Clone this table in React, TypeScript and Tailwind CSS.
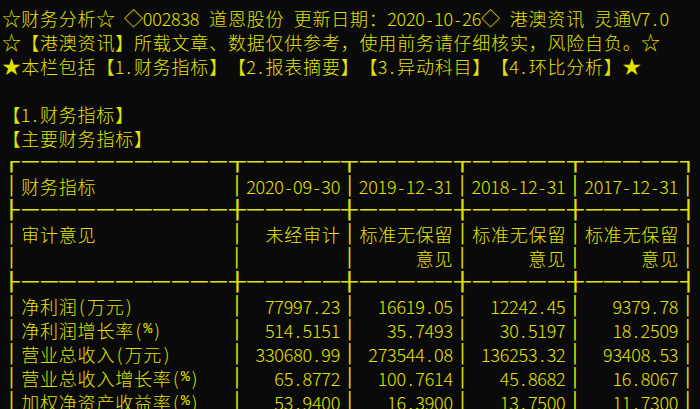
import React from "react";

const isWide = (c: string) => c.charCodeAt(0) > 0x2000;
const isBox = (c: string) => {
  const k = c.charCodeAt(0);
  return k >= 0x2500 && k <= 0x257f;
};
const isSym = (c: string) => c === "☆" || c === "★" || c === "◇";
const cols = (s: string) => [...s].reduce((n, c) => n + (isWide(c) ? 2 : 1), 0);
const padR = (s: string, n: number) => s + " ".repeat(Math.max(0, n - cols(s)));
const padL = (s: string, n: number) => " ".repeat(Math.max(0, n - cols(s))) + s;

const row = (label: string, vals: string[]) =>
  "│" + padR(label, 22) + "│" + vals.map((v) => padL(v, 10)).join("│") + "│";

const topLine = "┌" + "─".repeat(11) + ("┬" + "─".repeat(5)).repeat(4) + "┐";
const midLine = "├" + "─".repeat(11) + ("┼" + "─".repeat(5)).repeat(4) + "┤";

const lines: string[] = [
  "☆财务分析☆ ◇002838 道恩股份 更新日期：2020-10-26◇ 港澳资讯 灵通V7.0",
  "☆【港澳资讯】所载文章、数据仅供参考，使用前务请仔细核实，风险自负。☆",
  "★本栏包括【1.财务指标】【2.报表摘要】【3.异动科目】【4.环比分析】★",
  "",
  "【1.财务指标】",
  "【主要财务指标】",
  topLine,
  row("财务指标", ["2020-09-30", "2019-12-31", "2018-12-31", "2017-12-31"]),
  midLine,
  row("审计意见", ["未经审计", "标准无保留", "标准无保留", "标准无保留"]),
  row("", ["", "意见", "意见", "意见"]),
  midLine,
  row("净利润(万元)", ["77997.23", "16619.05", "12242.45", "9379.78"]),
  row("净利润增长率(%)", ["514.5151", "35.7493", "30.5197", "18.2509"]),
  row("营业总收入(万元)", ["330680.99", "273544.08", "136253.32", "93408.53"]),
  row("营业总收入增长率(%)", ["65.8772", "100.7614", "45.8682", "16.8067"]),
  row("加权净资产收益率(%)", ["53.9400", "16.3900", "13.7500", "11.7300"]),
];

function Cell({ c }: { c: string }) {
  if (isBox(c)) {
    return (
      <span className="flex w-[18.8px] min-w-0 shrink-0 justify-center font-['DejaVu_Sans_Mono'] text-[18px]">
        {c === "│" ? (
          <span>{c}</span>
        ) : (
          <span className="inline-block scale-x-[1.5]">{c}</span>
        )}
      </span>
    );
  }
  if (isSym(c)) {
    return (
      <span className="flex w-[18.8px] min-w-0 shrink-0 justify-center text-[19px] leading-[24px]">{c}</span>
    );
  }
  if (isWide(c)) {
    return <span className="flex w-[18.8px] min-w-0 shrink-0 justify-center">{c}</span>;
  }
  if (c === "%") {
    return (
      <span className="flex w-[9.4px] min-w-0 shrink-0 justify-center font-['Liberation_Mono'] text-[15px]">
        {c}
      </span>
    );
  }
  return <span className="flex w-[9.4px] min-w-0 shrink-0 justify-center">{c}</span>;
}

function Line({ text }: { text: string }) {
  return (
    <div className="flex h-[24px] leading-[24px] whitespace-pre">
      {[...text].map((c, i) => (
        <Cell key={i} c={c} />
      ))}
    </div>
  );
}

export default function App() {
  return (
    <div className="h-[409px] w-[700px] overflow-hidden bg-[#0a0a0a] pl-[2px] pt-[6px] font-['Noto_Sans_CJK_SC',sans-serif] text-[18px] font-light text-[#e2e200]">
      {lines.map((l, i) => (
        <Line key={i} text={l} />
      ))}
    </div>
  );
}
